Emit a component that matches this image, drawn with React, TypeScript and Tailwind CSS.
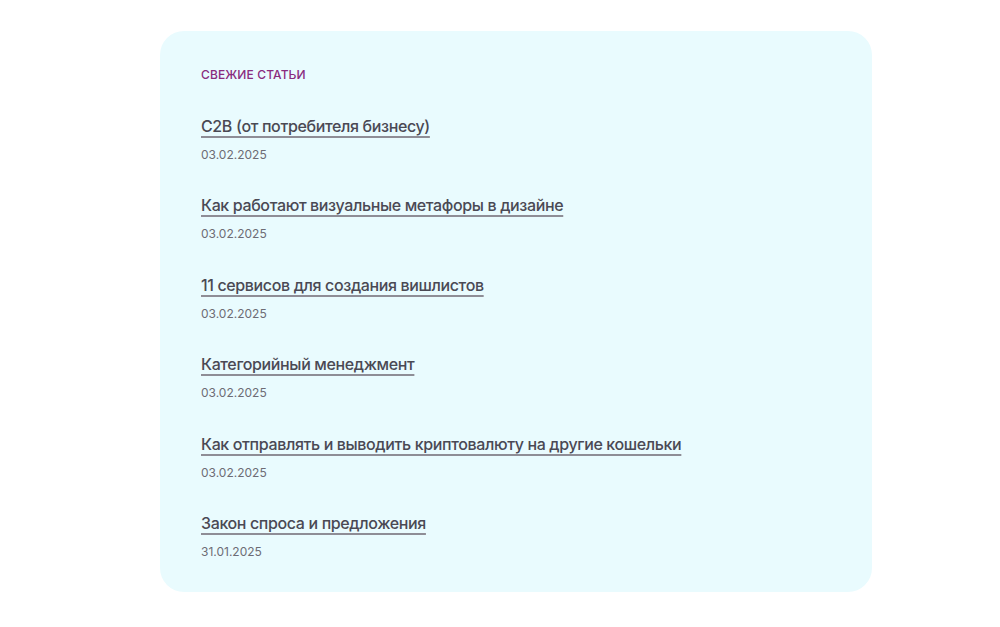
import React from "react";

const items = [
  { title: "C2B (от потребителя бизнесу)", date: "03.02.2025" },
  { title: "Как работают визуальные метафоры в дизайне", date: "03.02.2025" },
  { title: "11 сервисов для создания вишлистов", date: "03.02.2025" },
  { title: "Категорийный менеджмент", date: "03.02.2025" },
  { title: "Как отправлять и выводить криптовалюту на другие кошельки", date: "03.02.2025" },
  { title: "Закон спроса и предложения", date: "31.01.2025" },
];

export default function App() {
  return (
    <div
      className="w-[1000px] h-[627px] bg-white pt-[31px] pl-[160px]"
      style={{ fontFamily: "Inter, 'Noto Sans', sans-serif" }}
    >
      <div className="w-[712px] h-[561px] rounded-[24px] bg-[#e9fbfe] pt-[36px] px-[41px]">
        <div className="text-[12px] leading-[16px] font-medium uppercase text-[#8a2c7e] tracking-[0.01em]">
          Свежие статьи
        </div>
        <div className="mt-[31px] flex flex-col gap-[28.4px]">
          {items.map((it) => (
            <div key={it.title} className="flex flex-col items-start">
              <a
                href="#"
                className="text-[16px] leading-[24px] font-medium text-[#4a4954] tracking-[-0.023em] underline decoration-[#8e8d96] decoration-[1.5px] underline-offset-[4px]"
              >
                {it.title}
              </a>
              <div className="mt-[7px] text-[12px] leading-[20px] text-[#6d6c75]">{it.date}</div>
            </div>
          ))}
        </div>
      </div>
    </div>
  );
}
